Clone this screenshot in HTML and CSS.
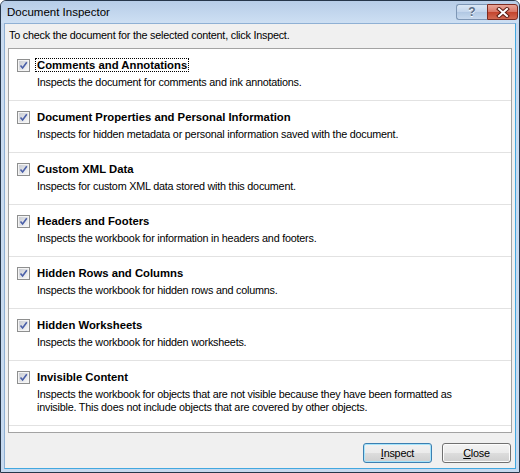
FILE: index.html
```html
<!DOCTYPE html>
<html>
<head>
<meta charset="utf-8">
<title>Document Inspector</title>
<link rel="stylesheet" href="styles.css">
</head>
<body>
<div class="window">
  <div class="titlebar">
    <span class="title">Document Inspector</span>
    <div class="caption-buttons">
      <div class="cap help">?</div>
      <div class="cap close">
        <svg width="14" height="11" viewBox="0 0 14 11">
          <path d="M3 2 L11 9 M11 2 L3 9" stroke="#5b1c12" stroke-width="4" stroke-linecap="square"/>
          <path d="M3 2 L11 9 M11 2 L3 9" stroke="#ffffff" stroke-width="2" stroke-linecap="square"/>
        </svg>
      </div>
    </div>
  </div>
  <div class="client">
    <p class="intro">To check the document for the selected content, click Inspect.</p>
    <div class="list">
      <div class="item">
        <span class="check"><svg width="13" height="13" viewBox="0 0 13 13"><defs><linearGradient id="g1" x1="0" y1="0" x2="1" y2="1"><stop offset="0" stop-color="#c9ccd3"/><stop offset="1" stop-color="#f7f7f7"/></linearGradient></defs><rect x="0.5" y="0.5" width="12" height="12" fill="#f4f4f4" stroke="#8e8f8f"/><rect x="2" y="2" width="9" height="9" fill="url(#g1)"/><path d="M3.5 6.5 L5.6 9 L9.8 3.3" fill="none" stroke="#4a5fa8" stroke-width="1.6"/></svg></span>
        <div class="texts">
          <div class="name"><span class="focus">Comments and Annotations</span></div>
          <div class="desc">Inspects the document for comments and ink annotations.</div>
        </div>
      </div>
      <div class="item">
        <span class="check"><svg width="13" height="13" viewBox="0 0 13 13"><rect x="0.5" y="0.5" width="12" height="12" fill="#f4f4f4" stroke="#8e8f8f"/><rect x="2" y="2" width="9" height="9" fill="url(#g1)"/><path d="M3.5 6.5 L5.6 9 L9.8 3.3" fill="none" stroke="#4a5fa8" stroke-width="1.6"/></svg></span>
        <div class="texts">
          <div class="name">Document Properties and Personal Information</div>
          <div class="desc">Inspects for hidden metadata or personal information saved with the document.</div>
        </div>
      </div>
      <div class="item">
        <span class="check"><svg width="13" height="13" viewBox="0 0 13 13"><rect x="0.5" y="0.5" width="12" height="12" fill="#f4f4f4" stroke="#8e8f8f"/><rect x="2" y="2" width="9" height="9" fill="url(#g1)"/><path d="M3.5 6.5 L5.6 9 L9.8 3.3" fill="none" stroke="#4a5fa8" stroke-width="1.6"/></svg></span>
        <div class="texts">
          <div class="name">Custom XML Data</div>
          <div class="desc">Inspects for custom XML data stored with this document.</div>
        </div>
      </div>
      <div class="item">
        <span class="check"><svg width="13" height="13" viewBox="0 0 13 13"><rect x="0.5" y="0.5" width="12" height="12" fill="#f4f4f4" stroke="#8e8f8f"/><rect x="2" y="2" width="9" height="9" fill="url(#g1)"/><path d="M3.5 6.5 L5.6 9 L9.8 3.3" fill="none" stroke="#4a5fa8" stroke-width="1.6"/></svg></span>
        <div class="texts">
          <div class="name">Headers and Footers</div>
          <div class="desc">Inspects the workbook for information in headers and footers.</div>
        </div>
      </div>
      <div class="item">
        <span class="check"><svg width="13" height="13" viewBox="0 0 13 13"><rect x="0.5" y="0.5" width="12" height="12" fill="#f4f4f4" stroke="#8e8f8f"/><rect x="2" y="2" width="9" height="9" fill="url(#g1)"/><path d="M3.5 6.5 L5.6 9 L9.8 3.3" fill="none" stroke="#4a5fa8" stroke-width="1.6"/></svg></span>
        <div class="texts">
          <div class="name">Hidden Rows and Columns</div>
          <div class="desc">Inspects the workbook for hidden rows and columns.</div>
        </div>
      </div>
      <div class="item">
        <span class="check"><svg width="13" height="13" viewBox="0 0 13 13"><rect x="0.5" y="0.5" width="12" height="12" fill="#f4f4f4" stroke="#8e8f8f"/><rect x="2" y="2" width="9" height="9" fill="url(#g1)"/><path d="M3.5 6.5 L5.6 9 L9.8 3.3" fill="none" stroke="#4a5fa8" stroke-width="1.6"/></svg></span>
        <div class="texts">
          <div class="name">Hidden Worksheets</div>
          <div class="desc">Inspects the workbook for hidden worksheets.</div>
        </div>
      </div>
      <div class="item">
        <span class="check"><svg width="13" height="13" viewBox="0 0 13 13"><rect x="0.5" y="0.5" width="12" height="12" fill="#f4f4f4" stroke="#8e8f8f"/><rect x="2" y="2" width="9" height="9" fill="url(#g1)"/><path d="M3.5 6.5 L5.6 9 L9.8 3.3" fill="none" stroke="#4a5fa8" stroke-width="1.6"/></svg></span>
        <div class="texts">
          <div class="name">Invisible Content</div>
          <div class="desc">Inspects the workbook for objects that are not visible because they have been formatted as<br>invisible. This does not include objects that are covered by other objects.</div>
        </div>
      </div>
    </div>
    <div class="actions">
      <div class="btn default"><u>I</u>nspect</div>
      <div class="btn"><u>C</u>lose</div>
    </div>
  </div>
</div>
</body>
</html>
```

FILE: styles.css
```css
html, body {
  margin: 0;
  padding: 0;
  background: #ffffff;
}

body {
  font-family: "Liberation Sans", Arial, sans-serif;
  font-size: 10.8px;
  letter-spacing: -0.22px;
  color: #000;
}

.window {
  box-sizing: border-box;
  width: 520px;
  height: 473px;
  border: 1px solid #26364a;
  border-radius: 6px 6px 0 0;
  background: linear-gradient(#bcd2ec, #c9dbf0 30px, #c6d9ef);
  display: flex;
  flex-direction: column;
}

.titlebar {
  height: 22px;
  display: flex;
  justify-content: space-between;
  align-items: flex-start;
  background: linear-gradient(#b7cde8, #cddff3);
  border-radius: 5px 5px 0 0;
}

.title {
  padding-left: 6px;
  line-height: 22px;
  font-size: 11.5px;
  letter-spacing: 0;
  color: #000;
}

.caption-buttons {
  display: flex;
  margin-top: 3px;
  margin-right: 1px;
}

.cap {
  box-sizing: border-box;
  height: 16px;
  display: flex;
  align-items: center;
  justify-content: center;
}

.help {
  width: 31px;
  border: 1px solid #7e97b6;
  border-right: none;
  border-radius: 3px 0 0 3px;
  background: linear-gradient(#dbe7f5, #c2d5ec 50%, #b0c7e3 51%, #c7d9ee);
  color: #5a6c85;
  font-weight: bold;
  font-size: 12px;
  letter-spacing: 0;
  text-shadow: 0 1px 0 #ffffff;
}

.close {
  width: 31px;
  border: 1px solid #7d2b20;
  border-radius: 0 3px 3px 0;
  background: linear-gradient(#e8a699, #d87564 50%, #c3432c 51%, #d26a52);
}

.client {
  flex: 1;
  margin: 0 3px 3px 3px;
  border: 1px solid #8fb0d4;
  border-right-color: #42a8e0;
  border-bottom-color: #42a8e0;
  background: #f0f0f0;
  display: flex;
  flex-direction: column;
}

.intro {
  margin: 0;
  padding: 4px 0 0 4px;
  line-height: 14px;
}

.list {
  margin: 6px 3px 0 3px;
  height: 385px;
  box-sizing: border-box;
  border: 1px solid #a3a3a3;
  background: #ffffff;
}

.item {
  display: flex;
  gap: 7px;
  padding: 9px 8px 11px 8px;
  border-bottom: 1px solid #e2e2e2;
}

.check {
  width: 13px;
  height: 13px;
  margin-top: 1px;
  flex: none;
  display: block;
}

.check svg {
  display: block;
}

.name {
  font-weight: bold;
  font-size: 11.3px;
  letter-spacing: 0;
  line-height: 14px;
}

.focus {
  outline: 1px dotted #000;
  outline-offset: 0;
  padding: 0 1px;
  margin-left: -1px;
}

.desc {
  margin-top: 4px;
  line-height: 13px;
}

.actions {
  display: flex;
  justify-content: flex-end;
  gap: 10px;
  margin-top: 10px;
  padding-right: 4px;
}

.btn {
  box-sizing: border-box;
  width: 69px;
  height: 20px;
  border: 1px solid #707070;
  border-radius: 3px;
  background: linear-gradient(#f3f3f3, #ebebeb 50%, #dddddd 51%, #cfcfcf);
  box-shadow: inset 0 0 0 1px #fcfcfc;
  display: flex;
  align-items: center;
  justify-content: center;
  line-height: 14px;
}

.btn.default {
  border-color: #3c7fb1;
  box-shadow: inset 0 0 0 1px #a6e4fb;
  background: linear-gradient(#f2f2f2, #ebebeb 50%, #dddddd 51%, #cfcfcf);
}
```
